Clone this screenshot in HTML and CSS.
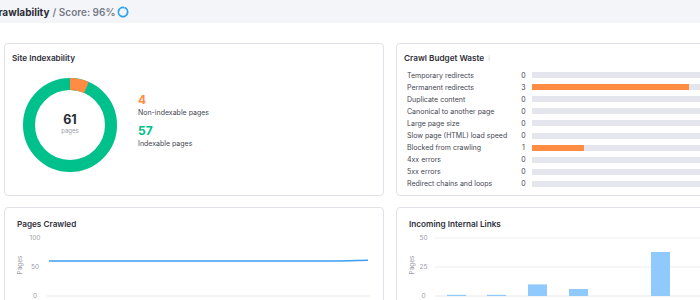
FILE: index.html
```html
<!DOCTYPE html>
<html>
<head>
<meta charset="utf-8">
<link rel="stylesheet" href="styles.css">
</head>
<body>
<div class="topbar">
  <span class="page-title">Crawlability</span>
  <span class="score">/ Score: 96%</span>
  <svg class="spinner" width="12" height="12" viewBox="0 0 12 12">
    <circle cx="6" cy="6" r="4.6" fill="none" stroke="#2ea3f2" stroke-width="1.8" stroke-dasharray="27.7 28.9" transform="rotate(-70 6 6)"/>
  </svg>
</div>

<div class="grid">
  <section class="card card-top">
    <h2 class="card-title">Site Indexability</h2>
    <div class="index-body">
      <svg class="donut" width="96" height="96" viewBox="0 0 96 96">
        <circle cx="48" cy="48" r="41" fill="none" stroke="#00c08b" stroke-width="12"/>
        <circle cx="48" cy="48" r="41" fill="none" stroke="#ff8c43" stroke-width="12" stroke-dasharray="16.9 300" transform="rotate(-90 48 48)"/>
        <text x="48" y="47" text-anchor="middle" class="donut-num">61</text>
        <text x="48" y="56" text-anchor="middle" class="donut-sub">pages</text>
      </svg>
      <div class="legend">
        <div class="legend-num orange">4</div>
        <div class="legend-label">Non-indexable pages</div>
        <div class="legend-num green gap">57</div>
        <div class="legend-label">Indexable pages</div>
      </div>
    </div>
  </section>

  <section class="card card-top">
    <h2 class="card-title">Crawl Budget Waste <span class="info">i</span></h2>
    <div class="waste">
      <span class="w-label">Temporary redirects</span><span class="w-val">0</span><span class="track"></span>
      <span class="w-label">Permanent redirects</span><span class="w-val">3</span><span class="track"><span class="fill" style="width:157px"></span></span>
      <span class="w-label">Duplicate content</span><span class="w-val">0</span><span class="track"></span>
      <span class="w-label">Canonical to another page</span><span class="w-val">0</span><span class="track"></span>
      <span class="w-label">Large page size</span><span class="w-val">0</span><span class="track"></span>
      <span class="w-label">Slow page (HTML) load speed</span><span class="w-val">0</span><span class="track"></span>
      <span class="w-label">Blocked from crawling</span><span class="w-val">1</span><span class="track"><span class="fill" style="width:52px"></span></span>
      <span class="w-label">4xx errors</span><span class="w-val">0</span><span class="track"></span>
      <span class="w-label">5xx errors</span><span class="w-val">0</span><span class="track"></span>
      <span class="w-label">Redirect chains and loops</span><span class="w-val">0</span><span class="track"></span>
    </div>
  </section>

  <section class="card card-bottom">
    <h2 class="card-title">Pages Crawled</h2>
    <svg class="chart" width="370" height="80" viewBox="0 0 370 80">
      <text class="axis" x="18" y="10.3" text-anchor="middle">100</text>
      <text class="axis" x="18" y="39.3" text-anchor="middle">50</text>
      <text class="axis" x="18" y="68.3" text-anchor="middle">0</text>
      <text class="axis" x="7" y="37" text-anchor="middle" transform="rotate(-90 5 37)">Pages</text>
      <line x1="30" y1="66" x2="353" y2="66" stroke="#e6e7ec" stroke-width="1"/>
      <polyline points="32,31 322,31 351,30.2" fill="none" stroke="#3d9df5" stroke-width="1.6"/>
    </svg>
  </section>

  <section class="card card-bottom">
    <h2 class="card-title">Incoming Internal Links</h2>
    <svg class="chart" width="370" height="80" viewBox="0 0 370 80">
      <text class="axis" x="14.5" y="10.3" text-anchor="middle">50</text>
      <text class="axis" x="14.5" y="39.3" text-anchor="middle">25</text>
      <text class="axis" x="14.5" y="68.3" text-anchor="middle">0</text>
      <text class="axis" x="7" y="37" text-anchor="middle" transform="rotate(-90 5 37)">Pages</text>
      <line x1="26" y1="8" x2="370" y2="8" stroke="#eceef2" stroke-width="1"/>
      <line x1="26" y1="37" x2="370" y2="37" stroke="#eceef2" stroke-width="1"/>
      <line x1="26" y1="66" x2="370" y2="66" stroke="#e6e7ec" stroke-width="1"/>
      <rect x="38" y="64.8" width="19" height="1.2" fill="#90cafd"/>
      <rect x="78" y="64.8" width="19" height="1.2" fill="#90cafd"/>
      <rect x="119" y="54.4" width="19" height="11.6" fill="#90cafd"/>
      <rect x="160" y="59" width="19" height="7" fill="#90cafd"/>
      <rect x="242" y="22" width="19" height="44" fill="#90cafd"/>
    </svg>
  </section>
</div>
</body>
</html>
```

FILE: styles.css
```css
html, body {
  margin: 0;
  padding: 0;
  background: #ffffff;
  overflow: hidden;
  width: 700px;
  height: 300px;
  font-family: Inter, "Noto Sans", "Liberation Sans", sans-serif;
  color: #333440;
}

.topbar {
  height: 23px;
  background: #f4f5f9;
  display: flex;
  align-items: center;
  font-size: 10px;
  white-space: nowrap;
}

.page-title {
  margin-left: -9px;
  font-weight: 700;
  color: #2b2c36;
}

.score {
  margin-left: 3px;
  font-weight: 600;
  color: #777a86;
}

.spinner {
  margin-left: 2px;
  display: block;
}

.grid {
  display: grid;
  grid-template-columns: 380px 380px;
  grid-template-rows: 153px 120px;
  column-gap: 12px;
  row-gap: 11px;
  padding: 20px 0 0 4px;
}

.card {
  box-sizing: border-box;
  border: 1px solid #e1e2e8;
  border-radius: 4px;
  background: #fff;
  overflow: hidden;
}

.card-top {
  padding: 8px 7px;
}

.card-bottom {
  padding: 10px 12px;
}

.card-title {
  margin: 0;
  font-size: 8.2px;
  line-height: 12px;
  font-weight: 600;
  color: #2f303a;
  white-space: nowrap;
}

.info {
  font-weight: 400;
  color: #c9cbd3;
  font-size: 7px;
  margin-left: 2px;
}

.index-body {
  display: flex;
  margin-top: 13px;
}

.donut {
  display: block;
  margin-left: 10px;
}

.donut-num {
  font-size: 12.5px;
  font-weight: 700;
  fill: #2b2c36;
}

.donut-sub {
  font-size: 6px;
  fill: #9a9ca6;
}

.legend {
  margin-left: 20px;
  margin-top: 16px;
}

.legend-num {
  font-size: 12px;
  line-height: 14px;
  font-weight: 700;
}

.legend-num.gap {
  margin-top: 6px;
}

.orange { color: #ff8c43; }
.green { color: #00c08b; }

.legend-label {
  font-size: 7px;
  line-height: 11px;
  color: #454652;
}

.waste {
  display: grid;
  grid-template-columns: 112px 8px 1fr;
  grid-auto-rows: 12.1px;
  align-items: center;
  margin-top: 4px;
  padding-left: 3px;
  font-size: 7px;
  color: #454652;
}

.w-label {
  white-space: nowrap;
}

.w-val {
  text-align: center;
  margin-left: 1px;
}

.track {
  display: block;
  height: 6px;
  margin-left: 5px;
  margin-right: 8px;
  background: #e5e6ed;
}

.fill {
  display: block;
  height: 6px;
  background: #ff8c43;
}

.chart {
  display: block;
  overflow: visible;
}

.axis {
  font-size: 6.5px;
  fill: #9a9ca6;
}
```
